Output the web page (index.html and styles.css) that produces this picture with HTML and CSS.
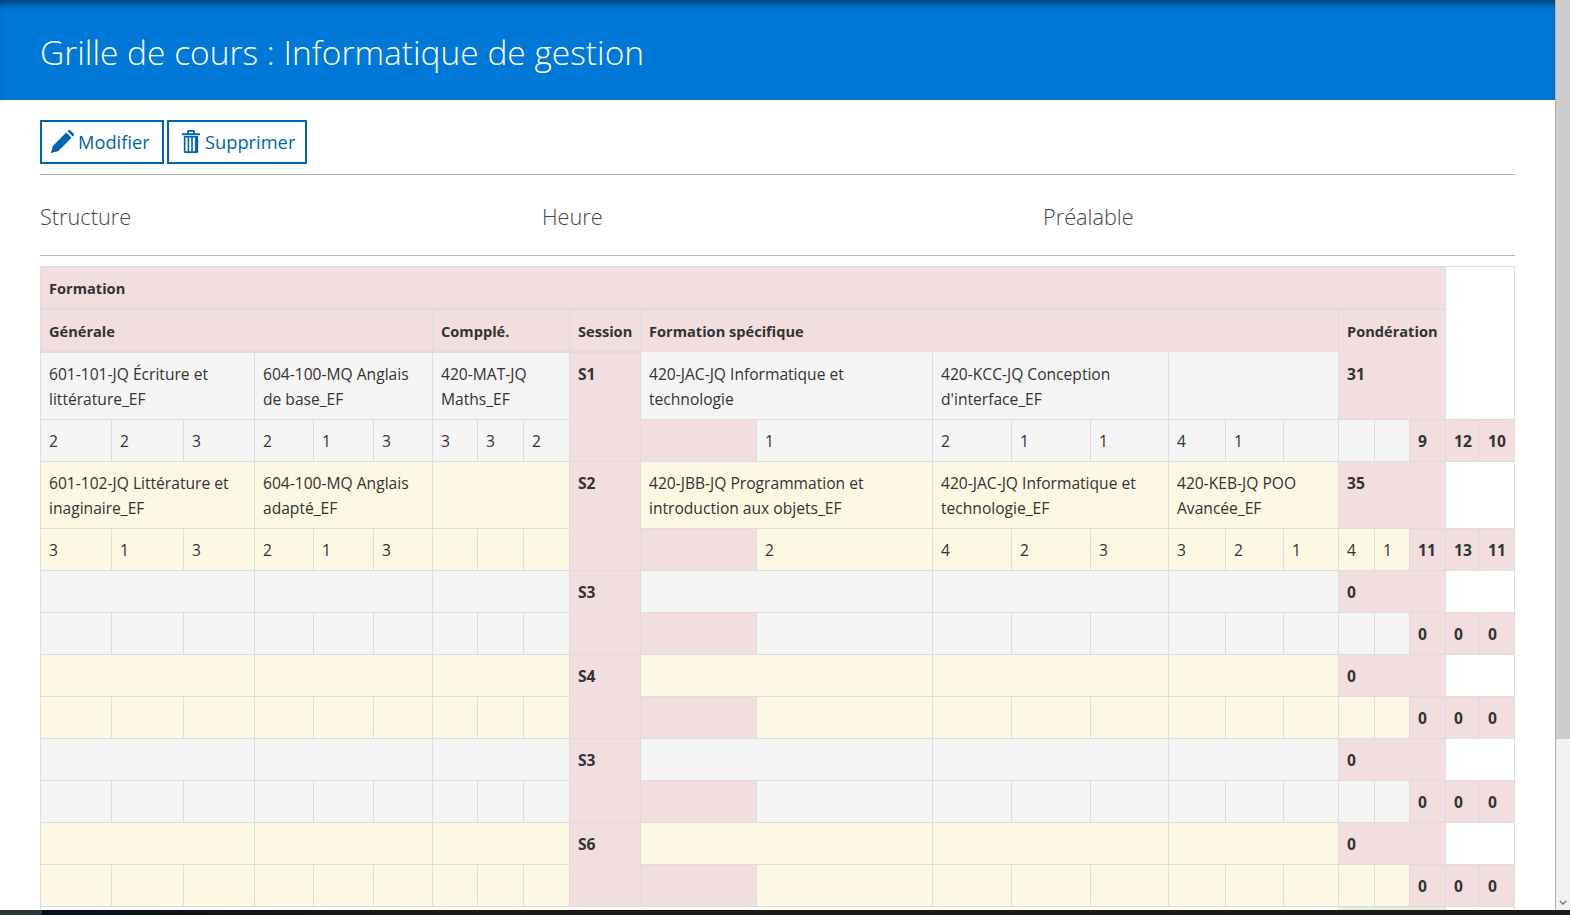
FILE: index.html
```html
<!DOCTYPE html>
<html lang="fr">
<head>
  <meta charset="UTF-8">
  <title>Grille de cours : Informatique de gestion</title>
  <link rel="stylesheet" href="styles.css">
</head>
<body>
  <div class="frame">
    <div class="page">
      <header class="banner">
        <h1>Grille de cours : Informatique de gestion</h1>
      </header>

      <div class="content">
        <div class="toolbar">
          <a class="btn btn-edit" href="#">
            <svg class="icon" viewBox="0 0 24 24"><path d="M0 24l1.900-7.400L15.900 2.600l5.500 5.500L7.400 22.100z"/><path d="M17.300 1.200l.8-.8a1.500 1.500 0 0 1 2.100 0l3.400 3.400a1.500 1.500 0 0 1 0 2.100l-.8.8z"/></svg>
            Modifier
          </a>
          <a class="btn btn-delete" href="#">
            <svg class="icon icon-trash" viewBox="0 0 18 23"><path d="M0 3.200h18v2H0zM5.200 3.500V1.300A1.300 1.300 0 0 1 6.500 0h5a1.300 1.300 0 0 1 1.300 1.300v2.200H11V1.800H7v1.700z"/><path d="M1.800 6h14.400v15.500a1.500 1.500 0 0 1-1.500 1.500H3.300a1.500 1.500 0 0 1-1.500-1.500zm1.700 1.400v13.800h2.100V7.400zm3.700 0v13.800h2V7.400zm3.600 0v13.800h2.100V7.400z" fill-rule="evenodd"/></svg>
            Supprimer
          </a>
        </div>

        <nav class="tabs">
          <span>Structure</span>
          <span>Heure</span>
          <span>Préalable</span>
        </nav>

        <table class="grid">
          <colgroup>
            <col class="c71"><col class="c72"><col class="c71">
            <col class="c59"><col class="c60"><col class="c59">
            <col class="c45"><col class="c46"><col class="c46">
            <col class="c71">
            <col class="c116"><col class="c176">
            <col class="c79"><col class="c79"><col class="c78">
            <col class="c57"><col class="c58"><col class="c55">
            <col class="c36"><col class="c35"><col class="c36">
            <col class="c34"><col class="c35">
          </colgroup>
          <tr>
            <th class="pink top label" colspan="21">Formation</th>
            <td class="blank" colspan="2" rowspan="3"></td>
          </tr>
          <tr>
            <th class="pink top label" colspan="6">Générale</th>
            <th class="pink top label" colspan="3">Compplé.</th>
            <th class="pink top label">Session</th>
            <th class="pink open label" colspan="8">Formation spécifique</th>
            <th class="pink open label" colspan="3">Pondération</th>
          </tr>

          <tr class="gray">
            <td colspan="3">601-101-JQ Écriture et littérature_EF</td>
            <td colspan="3">604-100-MQ Anglais de base_EF</td>
            <td colspan="3">420-MAT-JQ Maths_EF</td>
            <th class="pink" rowspan="2">S1</th>
            <td colspan="2">420-JAC-JQ Informatique et technologie</td>
            <td colspan="3">420-KCC-JQ Conception d'interface_EF</td>
            <td colspan="3"></td>
            <th class="pink" colspan="3">31</th>
          </tr>
          <tr class="gray">
            <td>2</td><td>2</td><td>3</td><td>2</td><td>1</td><td>3</td><td>3</td><td>3</td><td>2</td>
            <td class="pink"></td><td>1</td>
            <td>2</td><td>1</td><td>1</td><td>4</td><td>1</td><td></td><td></td><td></td>
            <th class="pink">9</th><th class="pink">12</th><th class="pink">10</th>
          </tr>

          <tr class="yellow">
            <td colspan="3">601-102-JQ Littérature et inaginaire_EF</td>
            <td colspan="3">604-100-MQ Anglais adapté_EF</td>
            <td colspan="3"></td>
            <th class="pink" rowspan="2">S2</th>
            <td colspan="2">420-JBB-JQ Programmation et introduction aux objets_EF</td>
            <td colspan="3">420-JAC-JQ Informatique et technologie_EF</td>
            <td colspan="3">420-KEB-JQ POO Avancée_EF</td>
            <th class="pink" colspan="3">35</th>
            <td class="blank" colspan="2"></td>
          </tr>
          <tr class="yellow">
            <td>3</td><td>1</td><td>3</td><td>2</td><td>1</td><td>3</td><td></td><td></td><td></td>
            <td class="pink"></td><td>2</td>
            <td>4</td><td>2</td><td>3</td><td>3</td><td>2</td><td>1</td><td>4</td><td>1</td>
            <th class="pink">11</th><th class="pink">13</th><th class="pink">11</th>
          </tr>

          <tr class="gray">
            <td colspan="3"></td><td colspan="3"></td><td colspan="3"></td>
            <th class="pink" rowspan="2">S3</th>
            <td colspan="2"></td><td colspan="3"></td><td colspan="3"></td>
            <th class="pink" colspan="3">0</th>
            <td class="blank" colspan="2"></td>
          </tr>
          <tr class="gray">
            <td></td><td></td><td></td><td></td><td></td><td></td><td></td><td></td><td></td>
            <td class="pink"></td><td></td>
            <td></td><td></td><td></td><td></td><td></td><td></td><td></td><td></td>
            <th class="pink">0</th><th class="pink">0</th><th class="pink">0</th>
          </tr>

          <tr class="yellow">
            <td colspan="3"></td><td colspan="3"></td><td colspan="3"></td>
            <th class="pink" rowspan="2">S4</th>
            <td colspan="2"></td><td colspan="3"></td><td colspan="3"></td>
            <th class="pink" colspan="3">0</th>
            <td class="blank" colspan="2"></td>
          </tr>
          <tr class="yellow">
            <td></td><td></td><td></td><td></td><td></td><td></td><td></td><td></td><td></td>
            <td class="pink"></td><td></td>
            <td></td><td></td><td></td><td></td><td></td><td></td><td></td><td></td>
            <th class="pink">0</th><th class="pink">0</th><th class="pink">0</th>
          </tr>

          <tr class="gray">
            <td colspan="3"></td><td colspan="3"></td><td colspan="3"></td>
            <th class="pink" rowspan="2">S3</th>
            <td colspan="2"></td><td colspan="3"></td><td colspan="3"></td>
            <th class="pink" colspan="3">0</th>
            <td class="blank" colspan="2"></td>
          </tr>
          <tr class="gray">
            <td></td><td></td><td></td><td></td><td></td><td></td><td></td><td></td><td></td>
            <td class="pink"></td><td></td>
            <td></td><td></td><td></td><td></td><td></td><td></td><td></td><td></td>
            <th class="pink">0</th><th class="pink">0</th><th class="pink">0</th>
          </tr>

          <tr class="yellow">
            <td colspan="3"></td><td colspan="3"></td><td colspan="3"></td>
            <th class="pink" rowspan="2">S6</th>
            <td colspan="2"></td><td colspan="3"></td><td colspan="3"></td>
            <th class="pink" colspan="3">0</th>
            <td class="blank" colspan="2"></td>
          </tr>
          <tr class="yellow">
            <td></td><td></td><td></td><td></td><td></td><td></td><td></td><td></td><td></td>
            <td class="pink"></td><td></td>
            <td></td><td></td><td></td><td></td><td></td><td></td><td></td><td></td>
            <th class="pink">0</th><th class="pink">0</th><th class="pink">0</th>
          </tr>

          <tr>
            <td class="blank" colspan="18"></td>
            <th class="green" colspan="3"></th>
            <td class="blank" colspan="2"></td>
          </tr>
        </table>
      </div>
    </div>

    <div class="scrollbar">
      <div class="thumb"></div>
      <div class="track"></div>
      <svg class="arrow" viewBox="0 0 10 6"><path d="M1 1l4 4 4-4" fill="none" stroke="#606060" stroke-width="1.4"/></svg>
    </div>
  </div>

  <div class="strip">
    <div class="strip-start"></div>
    <div class="strip-rest"></div>
  </div>
</body>
</html>
```
FILE: styles.css
```css
* { box-sizing: border-box; }

html, body {
  height: 100%;
  margin: 0;
}

body {
  display: flex;
  flex-direction: column;
  overflow: hidden;
  background: #fff;
  color: #333;
  font-family: 'Open Sans', 'Noto Sans', sans-serif;
  font-size: 15.6px;
}

.frame {
  flex: 1;
  display: flex;
  min-height: 0;
}

.page {
  flex: 1;
  min-width: 0;
  overflow: hidden;
}

.banner {
  height: 100px;
  padding: 3px 40px 0;
  display: flex;
  align-items: center;
  background: #0078d7;
  box-shadow: inset 0 8px 8px -5px rgba(0, 0, 0, 0.55);
}

.banner h1 {
  margin: 0;
  color: #fff;
  font-size: 33.5px;
  font-weight: 300;
}

.content {
  padding: 20px 40px 0;
}

.toolbar {
  display: flex;
  gap: 3px;
  height: 55px;
  padding-bottom: 10px;
  border-bottom: 1px solid #b4b4b4;
}

.btn {
  display: flex;
  align-items: center;
  gap: 4px;
  width: 124px;
  height: 44px;
  padding: 0 0 1px 9px;
  border: 2px solid #0063b1;
  color: #0063b1;
  font-size: 18.3px;
  text-decoration: none;
}

.btn-delete {
  gap: 5px;
  width: 140px;
  padding-left: 13px;
}

.icon {
  flex: none;
  width: 23px;
  height: 23px;
  fill: currentColor;
}

.icon-trash {
  width: 18px;
}

.tabs {
  display: grid;
  grid-template-columns: 502px 501px 1fr;
  align-items: center;
  height: 81px;
  padding-top: 2px;
  border-bottom: 1px solid #b4b4b4;
  color: #444;
  font-size: 21.7px;
  font-weight: 300;
}

.grid {
  width: 1475px;
  margin-top: 10px;
  border-collapse: collapse;
  table-layout: fixed;
}

.grid th, .grid td {
  height: 42px;
  padding: 9px 8px 7px;
  border: 1px solid #ddd;
  line-height: 25px;
  text-align: left;
  vertical-align: top;
}

.grid th { font-weight: 700; }
.grid .label { font-size: 14.6px; }

.gray td { background: #f5f5f5; }
.yellow td { background: #fdf8e3; }

.grid .pink { background: #f2dede; }
.grid .green { background: #dff0d8; }
.grid .blank { background: #fff; }

.grid .top { border-bottom-width: 2px; }
.grid .open { border-bottom-color: transparent; }

.c71 { width: 71px; }
.c72 { width: 72px; }
.c59 { width: 59px; }
.c60 { width: 60px; }
.c45 { width: 45px; }
.c46 { width: 46px; }
.c116 { width: 116px; }
.c176 { width: 176px; }
.c79 { width: 79px; }
.c78 { width: 78px; }
.c57 { width: 57px; }
.c58 { width: 58px; }
.c55 { width: 55px; }
.c36 { width: 36px; }
.c35 { width: 35px; }
.c34 { width: 34px; }

.scrollbar {
  position: relative;
  flex: 0 0 15px;
  display: flex;
  flex-direction: column;
  border-left: 1px solid #b0b0b0;
  background: #f1f1f1;
}

.thumb {
  height: 739px;
  background: #cdcdcd;
}

.arrow {
  position: absolute;
  right: 3px;
  bottom: 5px;
  width: 8px;
  height: 5px;
}

.strip {
  flex: 0 0 5px;
  display: flex;
}

.strip-start {
  width: 42px;
  background: #2e383b;
}

.strip-rest {
  flex: 1;
  background: linear-gradient(90deg, #06121a 0, #1d1a14 25%, #1c1a16 100%);
}
```
